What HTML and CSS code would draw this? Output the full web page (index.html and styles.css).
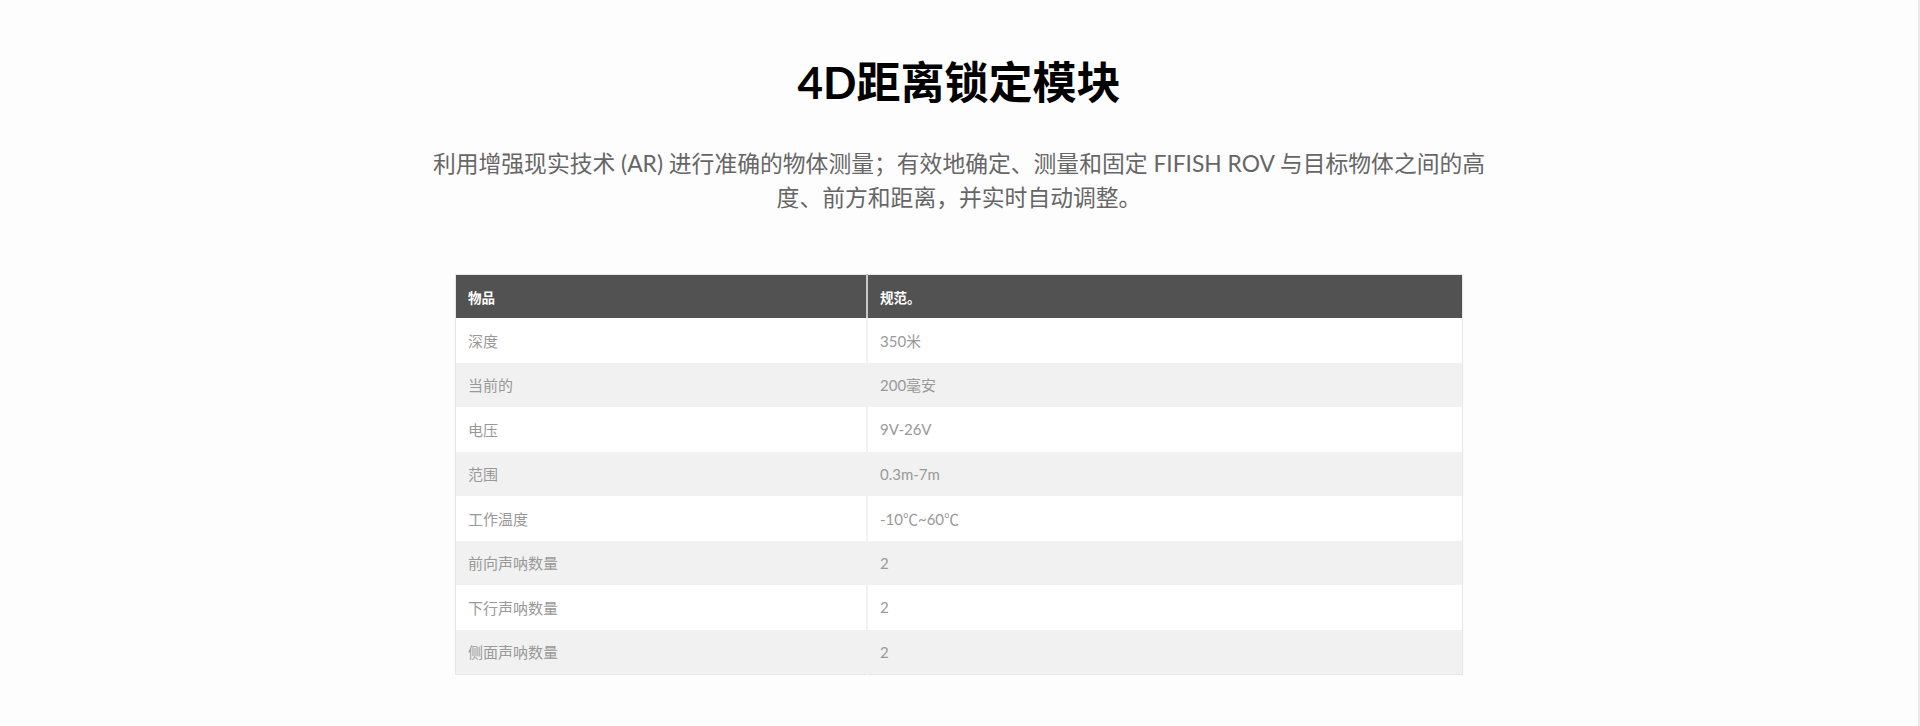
FILE: index.html
```html
<!DOCTYPE html>
<html lang="zh-CN">
<head>
<meta charset="utf-8">
<title>4D距离锁定模块</title>
<link rel="stylesheet" href="styles.css">
</head>
<body>
<div class="page">
  <section class="module">
    <h1 class="title">4D距离锁定模块</h1>
    <p class="desc">利用增强现实技术 (AR) 进行准确的物体测量；有效地确定、测量和固定 FIFISH ROV 与目标物体之间的高<br>度、前方和距离，并实时自动调整。</p>
    <table class="spec">
      <thead>
        <tr><th class="col-item">物品</th><th>规范。</th></tr>
      </thead>
      <tbody>
        <tr><td>深度</td><td>350米</td></tr>
        <tr><td>当前的</td><td>200毫安</td></tr>
        <tr><td>电压</td><td>9V-26V</td></tr>
        <tr><td>范围</td><td>0.3m-7m</td></tr>
        <tr><td>工作温度</td><td>-10℃~60℃</td></tr>
        <tr><td>前向声呐数量</td><td>2</td></tr>
        <tr><td>下行声呐数量</td><td>2</td></tr>
        <tr><td>侧面声呐数量</td><td>2</td></tr>
      </tbody>
    </table>
  </section>
</div>
</body>
</html>
```

FILE: styles.css
```css
html, body {
  margin: 0;
  padding: 0;
  background: #fdfdfd;
}
body {
  font-family: Lato, "Noto Sans CJK SC", sans-serif;
}
.page {
  min-height: 100vh;
  box-sizing: border-box;
  border-right: 2px solid #e9e9e9;
}
.module {
  padding-top: 56px;
  display: flex;
  flex-direction: column;
  align-items: center;
}
.title {
  margin: 0;
  font-size: 44px;
  line-height: 53px;
  font-weight: 700;
  color: #000;
}
.desc {
  margin: 37px 0 0;
  font-size: 22.8px;
  line-height: 34px;
  color: #666;
  text-align: center;
}
.spec {
  margin-top: 60px;
  width: 1008px;
  border-collapse: collapse;
  border: 1px solid #e6e6e6;
  font-size: 15px;
}
.spec th {
  background: #525252;
  color: #fff;
  font-weight: 700;
  font-size: 13.5px;
  text-align: left;
  height: 43px;
  padding: 0 12px;
  border-left: 2px solid #c8c8c8;
}
.spec th:first-child {
  border-left: none;
}
.spec .col-item {
  width: 386px;
}
.spec td {
  height: 44.5px;
  padding: 0 12px;
  color: #999;
  border-left: 2px solid #f2f2f2;
}
.spec td:first-child {
  border-left: none;
}
.spec tbody tr:nth-child(even) td {
  background: #f1f1f1;
  border-left-color: #f1f1f1;
}
.spec tbody tr:nth-child(odd) td {
  background: #fff;
}
```
